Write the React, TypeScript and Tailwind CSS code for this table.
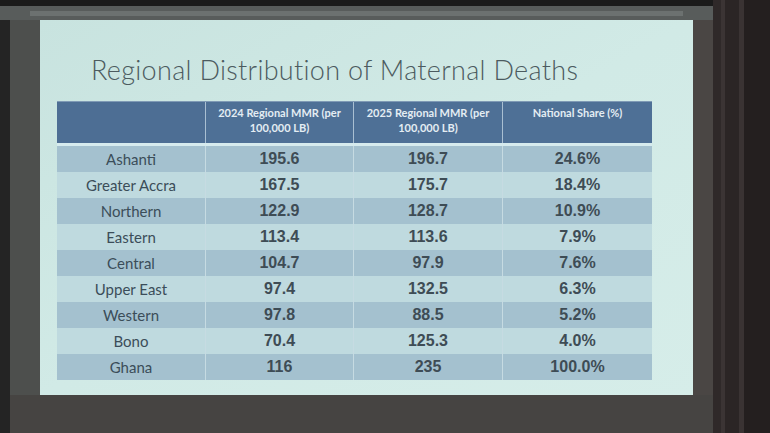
import React from 'react';

type Row = {
  region: string;
  mmr2024: string;
  mmr2025: string;
  share: string;
};

const rows: Row[] = [
  { region: 'Ashanti', mmr2024: '195.6', mmr2025: '196.7', share: '24.6%' },
  { region: 'Greater Accra', mmr2024: '167.5', mmr2025: '175.7', share: '18.4%' },
  { region: 'Northern', mmr2024: '122.9', mmr2025: '128.7', share: '10.9%' },
  { region: 'Eastern', mmr2024: '113.4', mmr2025: '113.6', share: '7.9%' },
  { region: 'Central', mmr2024: '104.7', mmr2025: '97.9', share: '7.6%' },
  { region: 'Upper East', mmr2024: '97.4', mmr2025: '132.5', share: '6.3%' },
  { region: 'Western', mmr2024: '97.8', mmr2025: '88.5', share: '5.2%' },
  { region: 'Bono', mmr2024: '70.4', mmr2025: '125.3', share: '4.0%' },
  { region: 'Ghana', mmr2024: '116', mmr2025: '235', share: '100.0%' },
];

const lato = "font-['Lato','Noto_Sans',sans-serif]";
const arial = "font-['Liberation_Sans',Arial,sans-serif]";

const MaternalTable: React.FC = () => {
  return (
    <div className="w-[595px] ml-[17px] mt-[18px]">
      {/* header */}
      <div className="flex h-[42px] border-t border-[#7f9ab5]">
        <div className="w-[148px] bg-[#4d6e94]" />
        <div className={`w-[148px] bg-[#4e7096] border-l border-[#a9bfd2] pt-[3px] text-center text-[11px] leading-[15px] font-bold text-[#e4edf3] ${lato}`}>
          2024 Regional MMR (per<br />100,000 LB)
        </div>
        <div className={`w-[149px] bg-[#4e7096] border-l border-[#a9bfd2] pt-[3px] text-center text-[11px] leading-[15px] font-bold text-[#e4edf3] ${lato}`}>
          2025 Regional MMR (per<br />100,000 LB)
        </div>
        <div className={`w-[150px] bg-[#4e7096] border-l border-[#a9bfd2] pt-[3px] text-center text-[11px] leading-[15px] font-bold text-[#e4edf3] ${lato}`}>
          National Share (%)
        </div>
      </div>
      <div className="h-[3px] bg-[#d6ebee]" />
      {rows.map((r, i) => {
        const bg = i % 2 === 0 ? 'bg-[#a4c1cf]' : 'bg-[#bfdadf]';
        return (
          <div key={r.region} className={`flex h-[26px] items-center ${bg}`}>
            <div className={`w-[148px] text-center text-[15px] text-[#3b4d59] ${lato}`}>{r.region}</div>
            <div className={`w-[148px] h-full flex items-center justify-center border-l border-[#c6dbe2] text-[16px] font-bold text-[#3e4c55] ${arial}`}>{r.mmr2024}</div>
            <div className={`w-[149px] h-full flex items-center justify-center border-l border-[#c6dbe2] text-[16px] font-bold text-[#3e4c55] ${arial}`}>{r.mmr2025}</div>
            <div className={`w-[150px] h-full flex items-center justify-center border-l border-[#c6dbe2] text-[16px] font-bold text-[#3e4c55] ${arial}`}>{r.share}</div>
          </div>
        );
      })}
    </div>
  );
};

const App: React.FC = () => {
  return (
    <div className="w-[770px] h-[433px] flex overflow-hidden bg-[#454341]">
      <div className="flex-1 flex flex-col">
        <div className="h-[6px] bg-[#1b1b1b]" />
        <div className="h-[14px] bg-[#585c5b] flex flex-col justify-center">
          <div className="h-[5px] mx-[30px] bg-[#6c7170]" />
        </div>
        <div className="flex h-[375px]">
          <div className="w-[10px] bg-[#242424]" />
          <div className="w-[30px] bg-[#4d4f4d]" />
          {/* slide */}
          <div className="w-[653px] bg-gradient-to-br from-[#c8e3df] via-[#d1eae6] to-[#d6ede9] flex flex-col">
            <div className={`pt-[36px] pl-[51px] h-[63px] text-[27px] leading-none font-light tracking-[0.3px] text-[#4c5b5f] ${lato}`}>
              Regional Distribution of Maternal Deaths
            </div>
            <MaternalTable />
          </div>
          <div className="flex-1 bg-[#4a4644]" />
        </div>
        <div className="flex-1 flex">
          <div className="w-[10px] bg-[#242424]" />
          <div className="flex-1 bg-[#464442]" />
        </div>
      </div>
      {/* dark curtain on the right */}
      <div className="w-[57px] flex bg-[#2a2424]">
        <div className="w-[8px] bg-[#2f2929]" />
        <div className="w-[4px] bg-[#3b3434]" />
        <div className="w-[14px] bg-[#2b2525]" />
        <div className="w-[5px] bg-[#3a3333]" />
        <div className="flex-1 bg-[#241f1f]" />
      </div>
    </div>
  );
};

export default App;
